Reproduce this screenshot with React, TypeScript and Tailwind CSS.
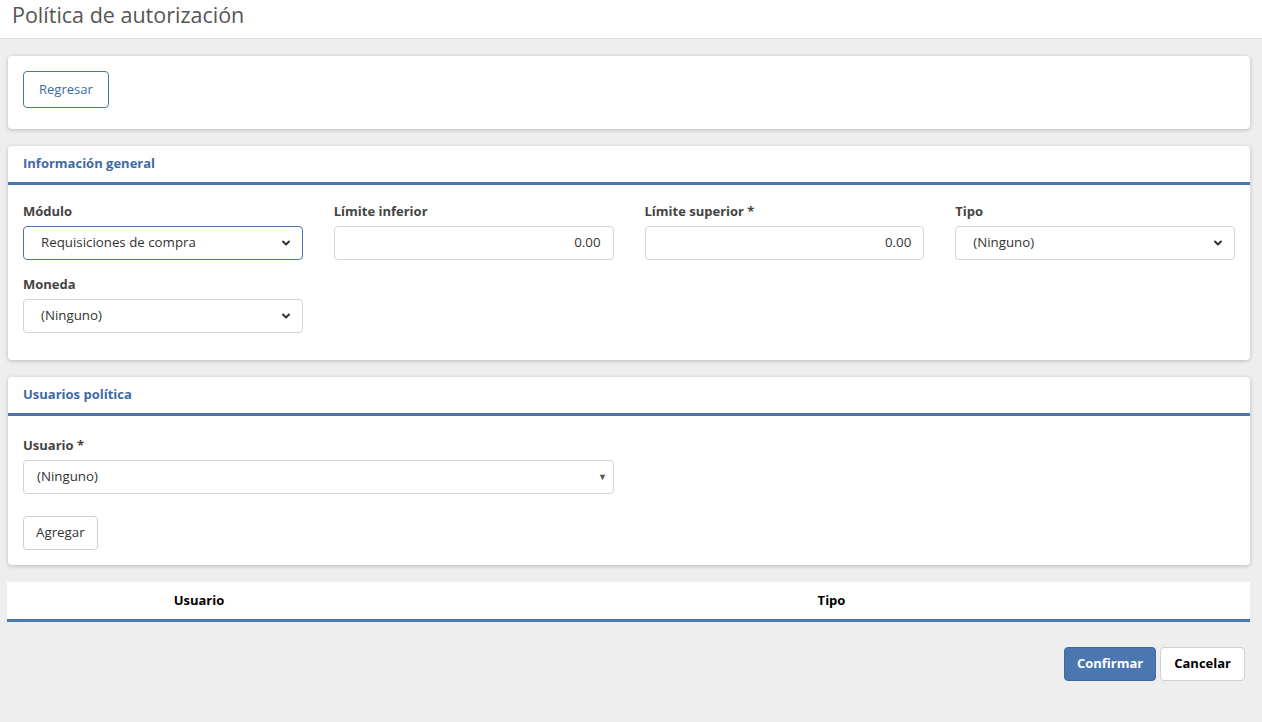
import { ChevronDown } from "lucide-react";

const font = { fontFamily: '"Open Sans", "Noto Sans", sans-serif' };

function Label({ children }: { children: React.ReactNode }) {
  return <div className="text-[13px] font-bold text-[#444] leading-[18px] mb-[6px]">{children}</div>;
}

function Select({ value, focused }: { value: string; focused?: boolean }) {
  return (
    <div
      className={`h-[34px] flex items-center justify-between pl-[17px] pr-[10px] bg-white rounded-[4px] border text-[13.3px] text-[#333] ${
        focused ? "border-[#4a77b0]" : "border-[#d4d4d4]"
      }`}
    >
      <span>{value}</span>
      <ChevronDown className="w-[12px] h-[12px] text-[#333]" strokeWidth={4} />
    </div>
  );
}

function NumInput({ value }: { value: string }) {
  return (
    <div className="h-[34px] flex items-center justify-end px-[12px] bg-white rounded-[4px] border border-[#d4d4d4] text-[13.3px] text-[#333]">
      {value}
    </div>
  );
}

function Card({ title, children }: { title?: string; children: React.ReactNode }) {
  return (
    <div className="bg-white rounded-[4px] shadow-[0_1px_4px_rgba(0,0,0,0.22)]">
      {title && (
        <div className="h-[39px] flex items-center px-[15px] border-b-[3px] border-[#4a77b0] text-[13px] font-bold text-[#3d6aa5]">
          {title}
        </div>
      )}
      {children}
    </div>
  );
}

export default function App() {
  return (
    <div className="min-h-[722px] bg-[#eeeeee]" style={font}>
      <div className="h-[39px] bg-white border-b border-[#dcdcdc] flex items-center px-[12px]">
        <h1 className="text-[21.5px] text-[#555] leading-none -mt-[8px]">Política de autorización</h1>
      </div>

      <div className="pl-[8px] pr-[12px] pt-[17px] flex flex-col gap-[17px]">
        <Card>
          <div className="px-[15px] pt-[15px] pb-[21px]">
            <button className="h-[37px] px-[15px] rounded-[4px] border border-[#4a77b0] text-[13px] text-[#3d6aa5] bg-white">
              Regresar
            </button>
          </div>
        </Card>

        <Card title="Información general">
          <div className="px-[15px] pt-[17px] pb-[27px]">
            <div className="grid grid-cols-4 gap-x-[31px] gap-y-[15px]">
              <div>
                <Label>Módulo</Label>
                <Select value="Requisiciones de compra" focused />
              </div>
              <div>
                <Label>Límite inferior</Label>
                <NumInput value="0.00" />
              </div>
              <div>
                <Label>Límite superior *</Label>
                <NumInput value="0.00" />
              </div>
              <div>
                <Label>Tipo</Label>
                <Select value="(Ninguno)" />
              </div>
              <div>
                <Label>Moneda</Label>
                <Select value="(Ninguno)" />
              </div>
            </div>
          </div>
        </Card>

        <Card title="Usuarios política">
          <div className="px-[15px] pt-[20px] pb-[15px]">
            <div className="w-[591px]">
              <Label>Usuario *</Label>
              <div className="h-[34px] flex items-center justify-between pl-[13px] pr-[6px] bg-white rounded-[4px] border border-[#d4d4d4] text-[13.3px] text-[#333]">
                <span>(Ninguno)</span>
                <span className="text-[9px] text-[#555]">▼</span>
              </div>
            </div>
            <button className="mt-[22px] h-[34px] px-[12px] rounded-[4px] border border-[#cfcfcf] text-[13.3px] text-[#333] bg-white">
              Agregar
            </button>
          </div>
        </Card>

        <div className="-ml-[1px] bg-white h-[40px] grid grid-cols-[384px_1fr] items-center border-b-[3px] border-[#4a77b0] text-[13px] font-bold text-black">
          <div className="text-center">Usuario</div>
          <div className="text-center pl-[22px]">Tipo</div>
        </div>

        <div className="flex justify-end gap-[4px] pt-[8px] pr-[5px]">
          <button className="h-[34px] px-[12px] rounded-[4px] bg-[#4a77b0] border border-[#3d6aa5] text-white text-[13px] font-bold">
            Confirmar
          </button>
          <button className="h-[34px] px-[13px] rounded-[4px] bg-white border border-[#cfcfcf] text-black text-[13px] font-bold">
            Cancelar
          </button>
        </div>
      </div>
    </div>
  );
}
